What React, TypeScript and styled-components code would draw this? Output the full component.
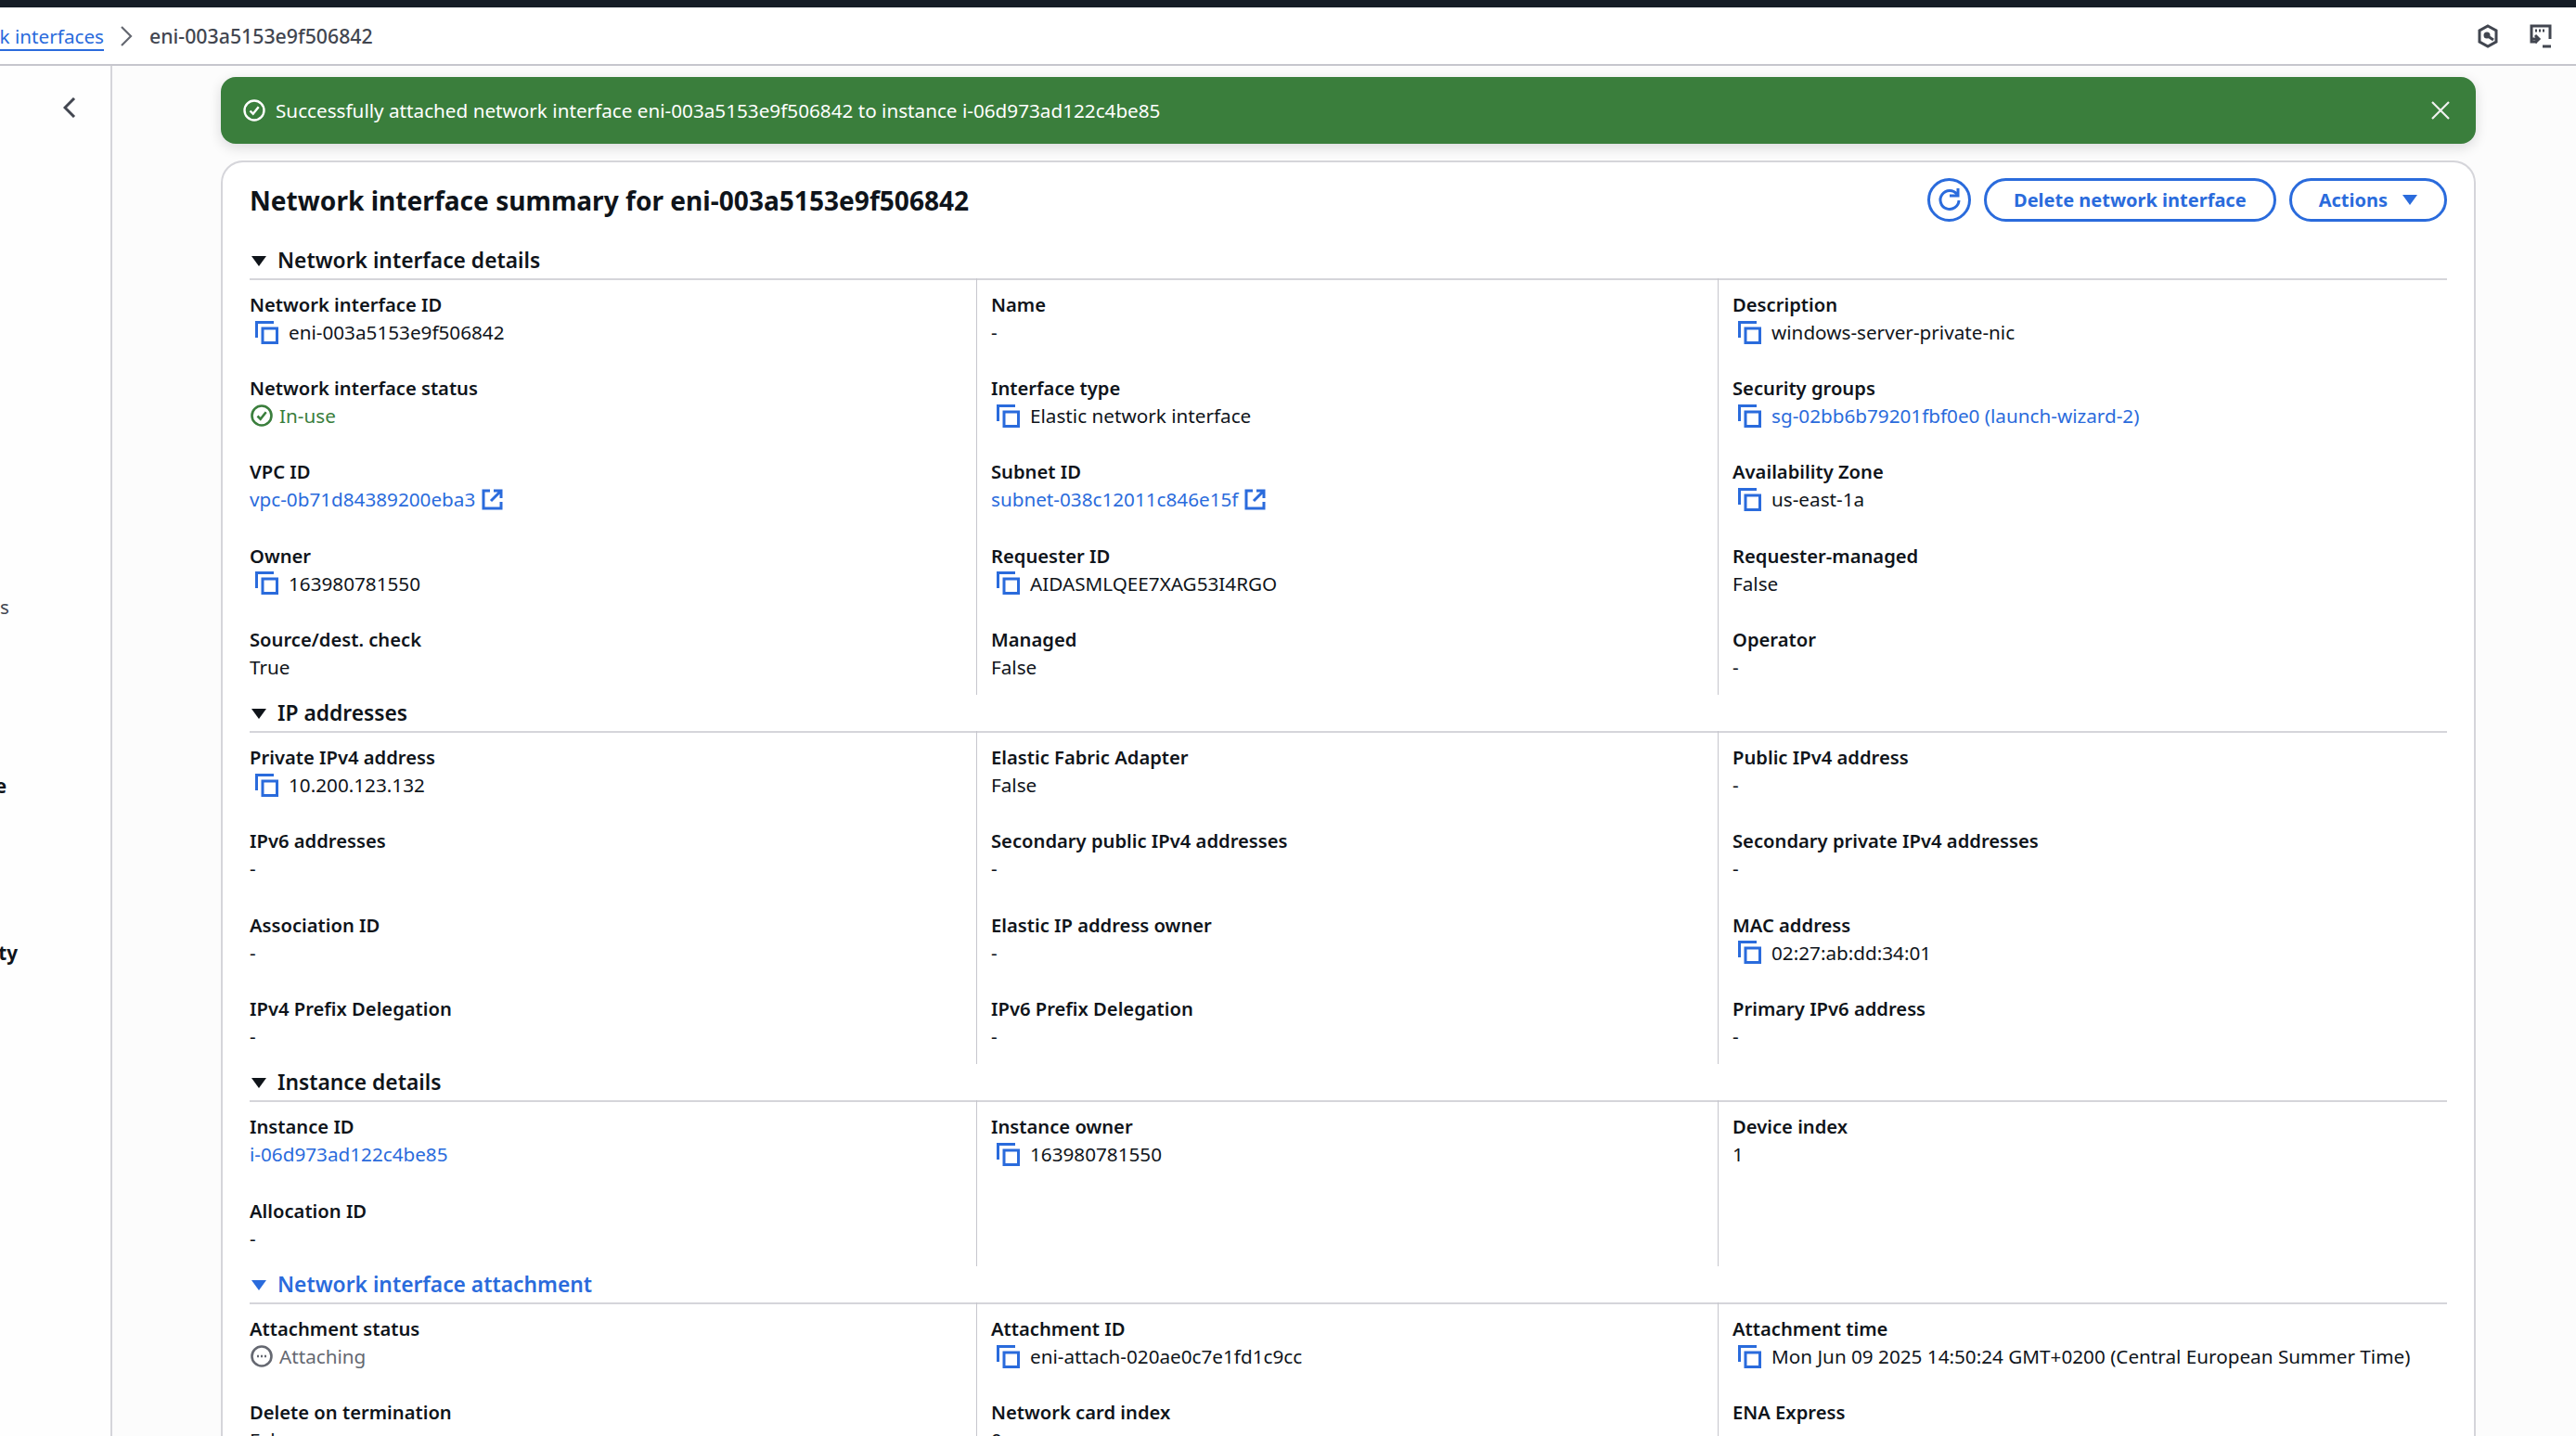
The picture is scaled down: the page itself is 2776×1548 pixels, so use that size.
import styled, { createGlobalStyle } from "styled-components";

const GlobalStyle = createGlobalStyle`
  html, body {
    margin: 0;
    height: 100%;
    overflow: hidden;
    background: #fcfcfc;
    color: #0f141a;
    font-family: "Noto Sans", "Liberation Sans", sans-serif;
    font-size: 20.7px;
    line-height: 30px;
  }
  * {
    box-sizing: border-box;
  }
`;

const Page = styled.div`
  display: flex;
  flex-direction: column;
  height: 1548px;
  overflow: hidden;
`;

const TopStrip = styled.div`
  height: 8px;
  flex: none;
  background: #161d26;
`;

const BreadcrumbBar = styled.div`
  height: 63px;
  flex: none;
  display: flex;
  align-items: center;
  padding-right: 26px;
  background: #fff;
  border-bottom: 2px solid #c6c6cd;
`;

const CrumbClip = styled.div`
  width: 112px;
  display: flex;
  justify-content: flex-end;
  overflow: hidden;
`;

const CrumbLink = styled.a`
  white-space: nowrap;
  color: #2a6bdc;
  border-bottom: 2px solid #2a6bdc;
  line-height: 28px;
  margin-top: 2px;
`;

const CrumbSep = styled.svg`
  width: 14px;
  height: 22px;
  margin: 0 18px 0 17px;
  fill: none;
  stroke: #656871;
  stroke-width: 2.2;
`;

const CrumbCurrent = styled.span`
  color: #424650;
  font-size: 21.3px;
  font-weight: 500;
`;

const TopIcons = styled.div`
  margin-left: auto;
  display: flex;
  gap: 33px;
  align-items: center;
`;

const TopIcon = styled.svg`
  width: 24px;
  height: 26px;
  fill: none;
  stroke: #424650;
  stroke-width: 3;
`;

const Body = styled.div`
  flex: 1;
  display: flex;
  min-height: 0;
`;

const Sidebar = styled.nav`
  width: 121px;
  flex: none;
  display: flex;
  flex-direction: column;
  background: #fefefe;
  border-right: 2px solid #d5d5da;
  overflow: hidden;
`;

const BackButton = styled.svg`
  width: 14px;
  height: 22px;
  margin: 34px 0 0 68px;
  flex: none;
  fill: none;
  stroke: #424650;
  stroke-width: 3;
`;

const NavItem = styled.div<{ $end: number; $top: number; $bold?: boolean }>`
  width: ${(p) => p.$end}px;
  margin-top: ${(p) => p.$top}px;
  display: flex;
  justify-content: flex-end;
  white-space: nowrap;
  font-weight: ${(p) => (p.$bold ? 700 : 400)};
  color: ${(p) => (p.$bold ? "#0f141a" : "#424650")};
`;

const Content = styled.main`
  flex: 1;
  min-width: 0;
  padding: 12px 108px 0 117px;
`;

const Banner = styled.div`
  height: 72px;
  display: flex;
  align-items: center;
  padding: 0 28px 0 24px;
  border-radius: 16px;
  color: #fff;
  background: #3a7e3c;
  box-shadow: 0 4px 14px rgba(0, 7, 22, 0.14);
`;

const BannerIcon = styled.svg`
  width: 24px;
  height: 24px;
  margin-right: 11px;
  fill: none;
  stroke: #fff;
  stroke-width: 2.4;
`;

const CloseIcon = styled.svg`
  width: 20px;
  height: 20px;
  margin-left: auto;
  fill: none;
  stroke: #f0f0f0;
  stroke-width: 2.2;
`;

const Card = styled.section`
  margin-top: 18px;
  padding: 17px 29px 0 29px;
  border: 2px solid #d5d5da;
  border-bottom: none;
  border-radius: 24px 24px 0 0;
  background: #fff;
`;

const CardHeader = styled.header`
  height: 47px;
  display: flex;
  align-items: center;
  margin-bottom: 22px;
`;

const Title = styled.h1`
  margin: 0;
  font-size: 28.1px;
  line-height: 40px;
  font-weight: 700;
`;

const Actions = styled.div`
  margin-left: auto;
  display: flex;
  gap: 14px;
`;

const PillButton = styled.button`
  height: 47px;
  padding: 0 29px;
  display: flex;
  align-items: center;
  gap: 16px;
  border: 3px solid #2a6bdc;
  border-radius: 24px;
  background: #fff;
  color: #2a6bdc;
  font: 700 20px "Noto Sans", "Liberation Sans", sans-serif;
`;

const RoundButton = styled(PillButton)`
  width: 47px;
  padding: 0;
  justify-content: center;
`;

const ButtonIcon = styled.svg`
  width: 26px;
  height: 26px;
  fill: none;
  stroke: #2a6bdc;
  stroke-width: 3;
`;

const Caret = styled.span<{ $color: string }>`
  width: 0;
  height: 0;
  flex: none;
  border-left: 8px solid transparent;
  border-right: 8px solid transparent;
  border-top: 11px solid ${(p) => p.$color};
`;

const SectionHeading = styled.h2<{ $color: string }>`
  margin: 0;
  height: 41px;
  display: flex;
  align-items: center;
  gap: 12px;
  padding: 1px 0 0 2px;
  border-bottom: 2px solid #d5d5da;
  color: ${(p) => p.$color};
  font-size: 22.8px;
  line-height: 30px;
  font-weight: 600;
`;

const Grid = styled.div`
  display: grid;
  grid-template-columns: 783px 799px 785px;
  margin-top: -2px;
`;

const Column = styled.div<{ $first?: boolean }>`
  display: flex;
  flex-direction: column;
  gap: 30.2px;
  padding: 13px 0 15.5px ${(p) => (p.$first ? 0 : 15)}px;
  border-left: ${(p) => (p.$first ? "none" : "1px solid #c6c6cd")};
`;

const Label = styled.div`
  font-size: 20.2px;
  font-weight: 600;
`;

const Value = styled.div`
  display: flex;
  align-items: center;
  white-space: nowrap;
`;

const CopyIcon = styled.svg`
  width: 25px;
  height: 25px;
  margin: 0 11px 0 6px;
  flex: none;
  fill: none;
  stroke: #2a6bdc;
  stroke-width: 3;
`;

const ValueLink = styled.a`
  color: #2a6bdc;
`;

const ExternalIcon = styled.svg`
  width: 23px;
  height: 23px;
  margin-left: 7px;
  fill: none;
  stroke: #2a6bdc;
  stroke-width: 3;
`;

const Status = styled.span<{ $color: string }>`
  display: flex;
  align-items: center;
  gap: 7px;
  color: ${(p) => p.$color};
`;

const StatusIcon = styled.svg<{ $color: string }>`
  width: 24px;
  height: 24px;
  margin-left: 1px;
  fill: none;
  stroke: ${(p) => p.$color};
  stroke-width: 2.6;
`;

const GREEN = "#3a7e3c";
const GREY = "#656871";

type Field = {
  label: string;
  value: string;
  kind?: "copy" | "link" | "ext" | "copylink" | "ok" | "pending";
};

type Section = {
  title: string;
  active?: boolean;
  columns: Field[][];
};

const sections: Section[] = [
  {
    title: "Network interface details",
    columns: [
      [
        { label: "Network interface ID", value: "eni-003a5153e9f506842", kind: "copy" },
        { label: "Network interface status", value: "In-use", kind: "ok" },
        { label: "VPC ID", value: "vpc-0b71d84389200eba3", kind: "ext" },
        { label: "Owner", value: "163980781550", kind: "copy" },
        { label: "Source/dest. check", value: "True" },
      ],
      [
        { label: "Name", value: "-" },
        { label: "Interface type", value: "Elastic network interface", kind: "copy" },
        { label: "Subnet ID", value: "subnet-038c12011c846e15f", kind: "ext" },
        { label: "Requester ID", value: "AIDASMLQEE7XAG53I4RGO", kind: "copy" },
        { label: "Managed", value: "False" },
      ],
      [
        { label: "Description", value: "windows-server-private-nic", kind: "copy" },
        { label: "Security groups", value: "sg-02bb6b79201fbf0e0 (launch-wizard-2)", kind: "copylink" },
        { label: "Availability Zone", value: "us-east-1a", kind: "copy" },
        { label: "Requester-managed", value: "False" },
        { label: "Operator", value: "-" },
      ],
    ],
  },
  {
    title: "IP addresses",
    columns: [
      [
        { label: "Private IPv4 address", value: "10.200.123.132", kind: "copy" },
        { label: "IPv6 addresses", value: "-" },
        { label: "Association ID", value: "-" },
        { label: "IPv4 Prefix Delegation", value: "-" },
      ],
      [
        { label: "Elastic Fabric Adapter", value: "False" },
        { label: "Secondary public IPv4 addresses", value: "-" },
        { label: "Elastic IP address owner", value: "-" },
        { label: "IPv6 Prefix Delegation", value: "-" },
      ],
      [
        { label: "Public IPv4 address", value: "-" },
        { label: "Secondary private IPv4 addresses", value: "-" },
        { label: "MAC address", value: "02:27:ab:dd:34:01", kind: "copy" },
        { label: "Primary IPv6 address", value: "-" },
      ],
    ],
  },
  {
    title: "Instance details",
    columns: [
      [
        { label: "Instance ID", value: "i-06d973ad122c4be85", kind: "link" },
        { label: "Allocation ID", value: "-" },
      ],
      [{ label: "Instance owner", value: "163980781550", kind: "copy" }],
      [{ label: "Device index", value: "1" }],
    ],
  },
  {
    title: "Network interface attachment",
    active: true,
    columns: [
      [
        { label: "Attachment status", value: "Attaching", kind: "pending" },
        { label: "Delete on termination", value: "False" },
      ],
      [
        { label: "Attachment ID", value: "eni-attach-020ae0c7e1fd1c9cc", kind: "copy" },
        { label: "Network card index", value: "0" },
      ],
      [
        {
          label: "Attachment time",
          value: "Mon Jun 09 2025 14:50:24 GMT+0200 (Central European Summer Time)",
          kind: "copy",
        },
        { label: "ENA Express", value: "-" },
      ],
    ],
  },
];

const Copy = () => (
  <CopyIcon viewBox="0 0 25 25">
    <path d="M1.5 18V1.5H20" />
    <rect x="8" y="8" width="15.5" height="15.5" />
  </CopyIcon>
);

const External = () => (
  <ExternalIcon viewBox="0 0 23 23">
    <path d="M9 2H2v19h19v-7" />
    <path d="M13 2h8v8M21 2L10 13" />
  </ExternalIcon>
);

const CheckCircle = ({ color }: { color: string }) => (
  <StatusIcon viewBox="0 0 24 24" $color={color}>
    <circle cx="12" cy="12" r="10.5" />
    <path d="M7.5 12.5l3.2 3.2 6-7.5" />
  </StatusIcon>
);

const renderValue = (field: Field) => {
  switch (field.kind) {
    case "copy":
      return (
        <>
          <Copy />
          {field.value}
        </>
      );
    case "copylink":
      return (
        <>
          <Copy />
          <ValueLink>{field.value}</ValueLink>
        </>
      );
    case "link":
      return <ValueLink>{field.value}</ValueLink>;
    case "ext":
      return (
        <>
          <ValueLink>{field.value}</ValueLink>
          <External />
        </>
      );
    case "ok":
      return (
        <Status $color={GREEN}>
          <CheckCircle color={GREEN} />
          {field.value}
        </Status>
      );
    case "pending":
      return (
        <Status $color={GREY}>
          <StatusIcon viewBox="0 0 24 24" $color={GREY}>
            <circle cx="12" cy="12" r="10.5" />
            <path d="M7 12h2M11 12h2M15 12h2" />
          </StatusIcon>
          {field.value}
        </Status>
      );
    default:
      return field.value;
  }
};

export default function App() {
  return (
    <Page>
      <GlobalStyle />
      <TopStrip />
      <BreadcrumbBar>
        <CrumbClip>
          <CrumbLink>Network interfaces</CrumbLink>
        </CrumbClip>
        <CrumbSep viewBox="0 0 14 22">
          <path d="M2 1l10 10L2 21" />
        </CrumbSep>
        <CrumbCurrent>eni-003a5153e9f506842</CrumbCurrent>
        <TopIcons>
          <TopIcon viewBox="0 0 24 26">
            <path d="M12 2l9 5v12l-9 5-9-5V7z" />
            <circle cx="11" cy="12" r="2" fill="#424650" />
            <path d="M12 13l6 4" />
          </TopIcon>
          <TopIcon viewBox="0 0 24 26">
            <path d="M8 19H2V2h20v14" />
            <path d="M6 7h2M10 7h2M14 7h2" />
            <path d="M6 12l4 4-4 4M3 16h7M14 24h9" />
          </TopIcon>
        </TopIcons>
      </BreadcrumbBar>
      <Body>
        <Sidebar>
          <BackButton viewBox="0 0 14 22">
            <path d="M12 1L2 11l10 10" />
          </BackButton>
          <NavItem $end={10} $top={512}>
            Capacity Reservations
          </NavItem>
          <NavItem $end={7} $top={163} $bold>
            Elastic Block Store
          </NavItem>
          <NavItem $end={19} $top={150} $bold>
            Network &amp; Security
          </NavItem>
        </Sidebar>
        <Content>
          <Banner>
            <BannerIcon viewBox="0 0 24 24">
              <circle cx="12" cy="12" r="10.5" />
              <path d="M7.5 12.5l3.2 3.2 6-7.5" />
            </BannerIcon>
            Successfully attached network interface eni-003a5153e9f506842 to instance i-06d973ad122c4be85
            <CloseIcon viewBox="0 0 20 20">
              <path d="M1 1l18 18M19 1L1 19" />
            </CloseIcon>
          </Banner>
          <Card>
            <CardHeader>
              <Title>Network interface summary for eni-003a5153e9f506842</Title>
              <Actions>
                <RoundButton aria-label="Refresh">
                  <ButtonIcon viewBox="0 0 26 26">
                    <path d="M21 6.5A10 10 0 1 0 23 13" />
                    <path d="M13 8h9V0" />
                  </ButtonIcon>
                </RoundButton>
                <PillButton>Delete network interface</PillButton>
                <PillButton>
                  Actions
                  <Caret $color="#2a6bdc" />
                </PillButton>
              </Actions>
            </CardHeader>
            {sections.map((section) => (
              <div key={section.title}>
                <SectionHeading $color={section.active ? "#2a6bdc" : "#0f141a"}>
                  <Caret $color={section.active ? "#2a6bdc" : "#0f141a"} />
                  {section.title}
                </SectionHeading>
                <Grid>
                  {section.columns.map((column, i) => (
                    <Column key={i} $first={i === 0}>
                      {column.map((field) => (
                        <div key={field.label}>
                          <Label>{field.label}</Label>
                          <Value>{renderValue(field)}</Value>
                        </div>
                      ))}
                    </Column>
                  ))}
                </Grid>
              </div>
            ))}
          </Card>
        </Content>
      </Body>
    </Page>
  );
}
